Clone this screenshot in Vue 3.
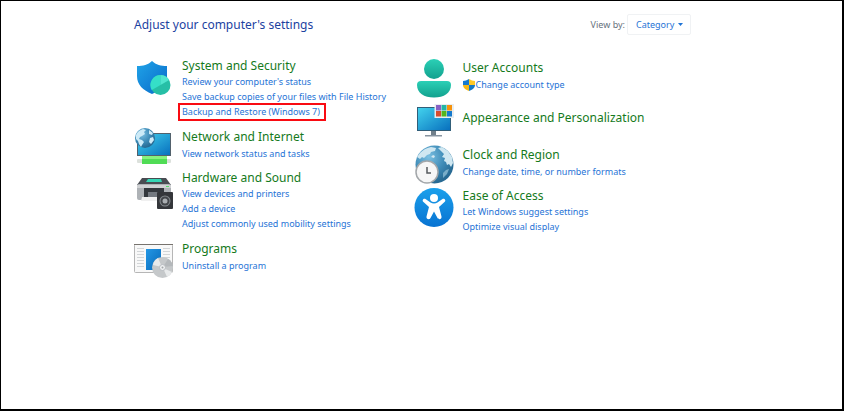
<template>
  <main class="control-panel">
    <header class="panel-header">
      <h1 class="panel-title">Adjust your computer's settings</h1>
      <div class="view-by">
        <label for="view-mode">View by:</label>
        <div class="select-box">
          <select id="view-mode" v-model="viewMode" class="view-select">
            <option>Category</option>
            <option>Large icons</option>
            <option>Small icons</option>
          </select>
          <svg class="caret" viewBox="0 0 5 3"><path d="M0 0h5L2.5 3z" fill="#1f74d6"/></svg>
        </div>
      </div>
    </header>

    <div class="columns">
      <div v-for="(column, index) in columns" :key="index" class="column" :class="'column-' + index">
        <section v-for="item in column" :key="item.title" class="category" :class="item.icon">
          <svg v-if="item.icon === 'security'" class="icon" viewBox="0 0 40 40">
            <path d="M18 4C14 8 9 9 3 9v10c0 9 6 14 15 18 9-4 15-9 15-18V9c-6 0-11-1-15-5z" fill="url(#shield)"/>
            <circle cx="26.500" cy="28" r="10" fill="#26bfa6"/>
            <path d="M26.500 28V18a10 10 0 0 0-8.700 15z" fill="#35dfc8"/>
            <path d="M26.500 28l8.700-5a10 10 0 0 0-8.700-5z" fill="#50e6ce"/>
          </svg>

          <svg v-else-if="item.icon === 'network'" class="icon" viewBox="0 0 40 40">
            <path d="M3 5h34v23H3z" fill="#52616c"/>
            <path d="M4 6h32v21H4z" fill="url(#screen)"/>
            <rect x="3" y="31" width="34" height="4" rx="1" fill="#dce1dc"/>
            <path d="M8 28h25v8H8z" fill="#50dc55"/>
            <path d="M8 28h25v3H8z" fill="#86f27e"/>
            <circle cx="11" cy="10" r="10" fill="url(#globe-light)"/>
            <path d="M2 7c1-3 4-5 7-6l3 1-2 2 1 2-3 2-2 1-1 2 3 1 2 2-2 3-1 2-2-3-1-3-2-2zM15 2l4 3-1 2-3-1zM16 10l3-1 1 3-3 4-2-2z" fill="#cceaf7"/>
          </svg>

          <svg v-else-if="item.icon === 'hardware'" class="icon" viewBox="0 0 40 40">
            <path d="M8 9h24l5 7H3z" fill="#484c52"/>
            <path d="M14 10h13l1 3H12z" fill="#35d6b5"/>
            <rect x="3" y="15" width="34" height="16" rx="2" fill="#aeb2b6"/>
            <path d="M3 16h34v3H3z" fill="#d0d2d4"/>
            <path d="M10 19h20v9H10z" fill="#34383d"/>
            <path d="M14 23h13v5H14z" fill="#747980"/>
            <path d="M8 28h18v4H7z" fill="#f0f0f0"/>
            <path d="M32 17h3v1h-3z" fill="#56de69"/>
            <rect x="23" y="23" width="16" height="17" rx="1" fill="#34363a"/>
            <circle cx="31" cy="32" r="5.500" fill="#858a8e"/>
            <circle cx="31" cy="32" r="4.500" fill="#424549"/>
            <circle cx="31" cy="32" r="2.500" fill="#aaaeb1"/>
          </svg>

          <svg v-else-if="item.icon === 'programs'" class="icon" viewBox="0 0 40 40">
            <rect x=".5" y="4.500" width="38" height="28" rx="1" fill="#f8f8f8" stroke="#b6b6b6"/>
            <path d="M0 4h39v1H0z" fill="#77736e"/>
            <path d="M3 8.500h7M3 11.500h7M3 14.500h7M3 17.500h7M3 20.500h7M3 23.500h7M3 26.500h7M29 8.500h7M29 11.500h7M29 14.500h7M29 17.500h7" stroke="#d2d5d7"/>
            <path d="M12 9h15v21H12z" fill="url(#program-page)"/>
            <circle cx="28.500" cy="27.500" r="10.500" fill="#c5c8ca"/>
            <path d="M28 27L24 18a10 10 0 0 0-5 7zM29 28l9 4a10 10 0 0 1-5 5z" fill="#e8eaeb"/>
            <path d="M29 27l5-8a10 10 0 0 1 5 7z" fill="#b4b8bb"/>
            <circle cx="28.500" cy="27.500" r="3" fill="#eef0f1" stroke="#b8bcc0"/>
            <circle cx="28.500" cy="27.500" r="1" fill="#a1a5a8"/>
          </svg>

          <svg v-else-if="item.icon === 'users'" class="icon" viewBox="0 0 40 40">
            <circle cx="19" cy="10" r="10" fill="url(#person)"/>
            <path d="M6 22h26a4 4 0 0 1 4 4c0 8-7 12.500-17 12.500S2 34 2 26a4 4 0 0 1 4-4z" fill="url(#person)"/>
          </svg>

          <svg v-else-if="item.icon === 'appearance'" class="icon" viewBox="0 0 40 40">
            <path d="M16 22h5v5h-5z" fill="#71808b"/>
            <path d="M10 26h17v1.500H10z" fill="#8794a0"/>
            <path d="M2 -2h34v24H2z" fill="#315e79"/>
            <path d="M3 -1h32v22H3z" fill="url(#screen)"/>
            <path d="M19.500 -5H39V9H19.500z" fill="#e8edf0"/>
            <path d="M21 -4h5v5.500h-5z" fill="#8661c5"/>
            <path d="M26.500 -4h5v5.500h-5z" fill="#24b5a5"/>
            <path d="M32 -4h5v5.500h-5z" fill="#f6920b"/>
            <path d="M21 2h5v5.500h-5z" fill="#d84c2d"/>
            <path d="M26.500 2h5v5.500h-5z" fill="#54b51d"/>
            <path d="M32 2h5v5.500h-5z" fill="#1479cd"/>
          </svg>

          <svg v-else-if="item.icon === 'clock'" class="icon" viewBox="0 0 40 40">
            <circle cx="19.500" cy="18.500" r="19" fill="url(#globe-light)"/>
            <path d="M5 7c3-3 6-5 11-6l5 1-1 3-4 1-1 2-3 1-3 3-2-1-2 2-3-2zM23 2l4-1 6 4 4 6 1 6-2 4-2-3-2 1-1-3-2-1 1-3-3-1 2-3-3-3z" fill="#cfe7f1"/>
            <path d="M18 9l2 1-1 2-3-1z" fill="#d4e8f1"/>
            <path d="M31 24l3-1-2 5-4 4v-5z" fill="#79adc8"/>
            <circle cx="12" cy="26" r="11" fill="#f7f7f7" stroke="#a3a7aa" stroke-width="1.500"/>
            <path d="M12 21v6h4" fill="none" stroke="#575b5f" stroke-width="1.500"/>
          </svg>

          <svg v-else class="icon" viewBox="0 0 40 40">
            <circle cx="19" cy="20.500" r="19.500" fill="url(#access)"/>
            <circle cx="19" cy="11" r="4" fill="#fff"/>
            <path d="M10.500 12l5 3.500c2 1.300 5 1.300 7 0l5-3.500c2-1 4 1.500 2 3l-5.500 5 2.500 9.500c.5 3-3 3.500-4 1.500l-3.500-6.500-3.500 6.500c-1 2-4.500 1.500-4-1.500L14 20l-5.500-5c-2-1.500 0-4 2-3z" fill="#fff"/>
          </svg>

          <div class="category-text">
            <h2><a href="#">{{ item.title }}</a></h2>
            <ul v-if="item.links.length" :class="{ single: item.links.length === 1 }">
              <li v-for="link in item.links" :key="link">
                <svg v-if="item.icon === 'users'" class="admin-shield" viewBox="0 0 12 12">
                  <path d="M6 0C4 1 2 2 0 2v4h6z" fill="#167bd0"/>
                  <path d="M6 0c2 1 4 2 6 2v4H6z" fill="#ffc928"/>
                  <path d="M0 6h6v6C3 11 0 9 0 6z" fill="#f9b916"/>
                  <path d="M6 6h6c0 3-3 5-6 6z" fill="#1479c9"/>
                </svg>
                <a href="#" :class="{ highlighted: link === highlightedLink }">{{ link }}</a>
              </li>
            </ul>
          </div>
        </section>
      </div>
    </div>

    <svg class="gradients" aria-hidden="true">
      <defs>
        <linearGradient id="shield" x2="1" y2="1"><stop stop-color="#20a4e8"/><stop offset="1" stop-color="#0869c9"/></linearGradient>
        <linearGradient id="screen" x2="1" y2="1"><stop stop-color="#42d2ed"/><stop offset="1" stop-color="#0870be"/></linearGradient>
        <radialGradient id="globe-light" cx=".35" cy=".3" r=".7"><stop stop-color="#7cc0e2"/><stop offset=".6" stop-color="#3d8ab6"/><stop offset="1" stop-color="#286a93"/></radialGradient>
        <linearGradient id="program-page" x2="1" y2="1"><stop stop-color="#2397e5"/><stop offset="1" stop-color="#0869b9"/></linearGradient>
        <linearGradient id="person" x2="0" y2="1"><stop stop-color="#2bd0b6"/><stop offset="1" stop-color="#12a18e"/></linearGradient>
        <linearGradient id="access" x2="0" y2="1"><stop stop-color="#1ba0eb"/><stop offset="1" stop-color="#0873d2"/></linearGradient>
      </defs>
    </svg>
  </main>
</template>

<script setup>
import { ref } from 'vue';

const viewMode = ref('Category');
const highlightedLink = 'Backup and Restore (Windows 7)';

const columns = [
  [
    {
      icon: 'security',
      title: 'System and Security',
      links: ["Review your computer's status", 'Save backup copies of your files with File History', highlightedLink]
    },
    { icon: 'network', title: 'Network and Internet', links: ['View network status and tasks'] },
    {
      icon: 'hardware',
      title: 'Hardware and Sound',
      links: ['View devices and printers', 'Add a device', 'Adjust commonly used mobility settings']
    },
    { icon: 'programs', title: 'Programs', links: ['Uninstall a program'] }
  ],
  [
    { icon: 'users', title: 'User Accounts', links: ['Change account type'] },
    { icon: 'appearance', title: 'Appearance and Personalization', links: [] },
    { icon: 'clock', title: 'Clock and Region', links: ['Change date, time, or number formats'] },
    { icon: 'access', title: 'Ease of Access', links: ['Let Windows suggest settings', 'Optimize visual display'] }
  ]
];
</script>

<style>
    body {
        margin: 0;
        background: #fff;
    }
</style>

<style scoped>
    .control-panel {
        box-sizing: border-box;
        min-height: 100vh;
        padding: 12px 151px 12px 133px;
        border: solid #000;
        border-width: 1px 2px 2px 1px;
        font-family: "Noto Sans", "Open Sans", sans-serif;
        font-size: 9px;
        line-height: 15px;
    }

    .panel-header {
        display: flex;
        align-items: center;
        justify-content: space-between;
        height: 22px;
        margin-bottom: 22px;
    }

    .panel-title {
        margin: 0;
        font-size: 12px;
        font-weight: 400;
        color: #1c429f;
    }

    .view-by {
        display: flex;
        align-items: center;
        gap: 2px;
        color: #68727d;
    }

    .select-box {
        display: grid;
        align-items: center;
        width: 64px;
    }

    .view-select {
        grid-area: 1 / 1;
        box-sizing: border-box;
        width: 100%;
        height: 21px;
        padding: 0 8px;
        appearance: none;
        background: #fff;
        border: 1px solid #f0f2f4;
        border-radius: 2px;
        font: inherit;
        color: #1f74d6;
    }

    .caret {
        grid-area: 1 / 1;
        justify-self: end;
        width: 5px;
        height: 3px;
        margin-right: 8px;
        pointer-events: none;
    }

    .columns {
        display: grid;
        grid-template-columns: 1fr 1fr;
        column-gap: 4px;
    }

    .column {
        display: flex;
        flex-direction: column;
        gap: 8px;
    }

    .column-1 {
        padding-top: 2px;
    }

    .category {
        display: flex;
        align-items: flex-start;
        gap: 8px;
    }

    .security,
    .hardware {
        padding-bottom: 1px;
    }

    .users {
        min-height: 42px;
    }

    .appearance {
        min-height: 29px;
    }

    .icon {
        flex: none;
        width: 40px;
        height: 40px;
        margin-bottom: -12px;
        overflow: visible;
    }

    h2 {
        margin: 0;
        font-size: 12px;
        font-weight: 400;
        line-height: 17px;
        white-space: nowrap;
    }

    h2 a {
        color: #157a1c;
    }

    a {
        color: #1f74d6;
        text-decoration: none;
    }

    a:hover {
        text-decoration: underline;
    }

    ul {
        margin: 0;
        padding: 0;
        list-style: none;
    }

    .single {
        padding-top: 1px;
    }

    li {
        display: flex;
        align-items: center;
        gap: 1px;
        height: 15px;
        white-space: nowrap;
    }

    .admin-shield {
        width: 12px;
        height: 12px;
    }

    .highlighted {
        padding-right: 2px;
        line-height: 10px;
        outline: 2px solid #f90b12;
        outline-offset: 2px;
    }

    .gradients {
        position: absolute;
        width: 0;
        height: 0;
    }
</style>
